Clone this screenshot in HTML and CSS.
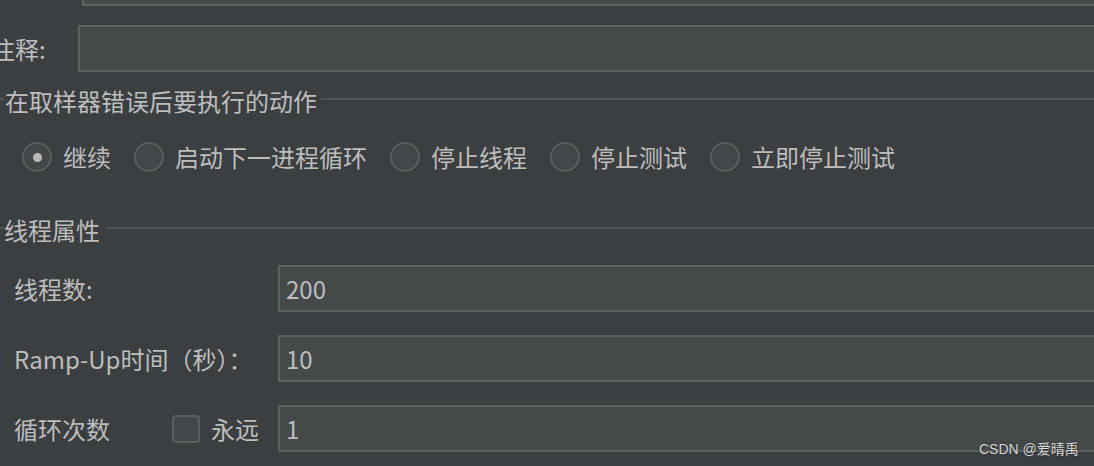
FILE: index.html
```html
<!DOCTYPE html>
<html lang="zh">
<head>
<meta charset="utf-8">
<link rel="stylesheet" href="styles.css">
</head>
<body>
<div class="page">
  <div class="top-field"></div>

  <div class="comment-row">
    <span class="comment-label">注释:</span>
    <div class="field comment-field"></div>
  </div>

  <div class="group-title first">
    <span class="gline short"></span>
    <span class="gtext">在取样器错误后要执行的动作</span>
    <span class="gline long"></span>
  </div>

  <div class="radio-row">
    <label class="radio"><span class="dot checked"></span><span>继续</span></label>
    <label class="radio"><span class="dot"></span><span>启动下一进程循环</span></label>
    <label class="radio"><span class="dot"></span><span>停止线程</span></label>
    <label class="radio"><span class="dot"></span><span>停止测试</span></label>
    <label class="radio"><span class="dot"></span><span>立即停止测试</span></label>
  </div>

  <div class="group-title second">
    <span class="gline short"></span>
    <span class="gtext">线程属性</span>
    <span class="gline long"></span>
  </div>

  <div class="prop-rows">
    <div class="prop-row">
      <span class="prop-label">线程数:</span>
      <div class="field value-field">200</div>
    </div>
    <div class="prop-row">
      <span class="prop-label">Ramp-Up时间（秒）：</span>
      <div class="field value-field">10</div>
    </div>
    <div class="prop-row">
      <span class="prop-label loop-label">循环次数</span>
      <span class="checkbox"></span>
      <span class="forever">永远</span>
      <div class="field value-field">1</div>
    </div>
  </div>

  <div class="watermark">CSDN @爱晴禹</div>
</div>
</body>
</html>
```

FILE: styles.css
```css
html, body {
  margin: 0;
  padding: 0;
  background: #3c3f41;
  overflow: hidden;
}

.page {
  position: relative;
  width: 1094px;
  height: 466px;
  overflow: hidden;
  font-family: "Noto Sans CJK SC", "Noto Sans", sans-serif;
  font-size: 24px;
  color: #bdbdbd;
}

.field {
  background: #45494a;
  border: 2px solid #5d6061;
  box-sizing: border-box;
}

.top-field {
  margin-left: 82px;
  margin-right: -10px;
  height: 6px;
  background: #45494a;
  border-bottom: 2px solid #5d6061;
  border-left: 2px solid #5d6061;
  box-sizing: border-box;
}

.comment-row {
  display: flex;
  align-items: center;
  margin-top: 19px;
  height: 47px;
}

.comment-label {
  margin-left: -9px;
  width: 87px;
  flex: none;
  line-height: 30px;
}

.comment-field {
  flex: 1;
  height: 47px;
  margin-right: -10px;
}

.group-title {
  display: flex;
  align-items: center;
  height: 30px;
  line-height: 30px;
}

.group-title.first {
  margin-top: 14px;
}

.group-title.second {
  margin-top: 43px;
}

.gline {
  height: 2px;
  background: #515456;
  margin-bottom: 4px;
}

.gline.short {
  width: 4px;
  flex: none;
}

.gline.long {
  flex: 1;
}

.group-title.first .gtext {
  padding: 0 4px 0 1px;
}

.group-title.second .gtext {
  padding: 0 6px 0 0;
}

.radio-row {
  display: flex;
  align-items: center;
  margin-top: 26px;
  height: 30px;
  padding-left: 22px;
  gap: 23px;
}

.radio {
  display: flex;
  align-items: center;
  gap: 11px;
  line-height: 30px;
}

.dot {
  width: 30px;
  height: 30px;
  box-sizing: border-box;
  border-radius: 50%;
  border: 2px solid #5a5d5e;
  background: #43474a;
  display: flex;
  align-items: center;
  justify-content: center;
  flex: none;
}

.dot.checked::after {
  content: "";
  width: 9px;
  height: 9px;
  border-radius: 50%;
  background: #b8b8b8;
}

.prop-rows {
  margin-top: 20px;
  display: flex;
  flex-direction: column;
  gap: 23px;
}

.prop-row {
  display: flex;
  align-items: center;
  height: 47px;
  padding-left: 14px;
}

.prop-label {
  width: 264px;
  flex: none;
  line-height: 30px;
}

.prop-label.loop-label {
  width: 158px;
}

.checkbox {
  width: 28px;
  height: 28px;
  box-sizing: border-box;
  border: 2px solid #5a5d5e;
  border-radius: 4px;
  background: #43474a;
  flex: none;
}

.forever {
  margin-left: 11px;
  width: 67px;
  flex: none;
  line-height: 30px;
}

.value-field {
  flex: 1;
  height: 47px;
  margin-right: -10px;
  padding-left: 6px;
  line-height: 43px;
}

.watermark {
  position: absolute;
  left: 979px;
  top: 438px;
  font-family: "Liberation Sans", "Noto Sans CJK SC", sans-serif;
  font-size: 14px;
  line-height: 22px;
  color: #d8d8d8;
  text-shadow: 0 0 2px #202020;
}
```
